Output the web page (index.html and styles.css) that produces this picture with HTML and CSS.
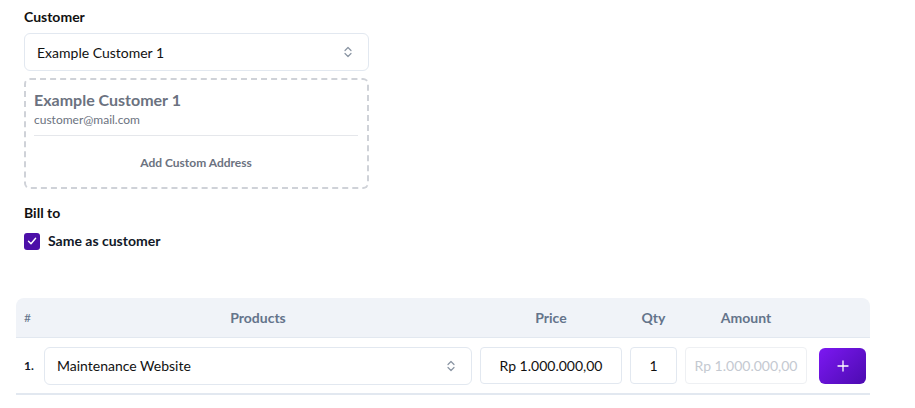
FILE: index.html
```html
<!DOCTYPE html>
<html>
<head>
<meta charset="utf-8">
<link rel="stylesheet" href="styles.css">
</head>
<body>
<div class="page">
  <section class="customer">
    <div class="label">Customer</div>
    <div class="select">
      <span>Example Customer 1</span>
      <svg class="chev" width="10" height="14" viewBox="0 0 10 14"><path d="M2 5.5 L5 2.5 L8 5.5 M2 8.5 L5 11.5 L8 8.5" fill="none" stroke="#8a94a3" stroke-width="1.2" stroke-linecap="round" stroke-linejoin="round"/></svg>
    </div>
    <div class="card">
      <div class="card-name">Example Customer 1</div>
      <div class="card-email">customer@mail.com</div>
      <div class="card-add">Add Custom Address</div>
    </div>
    <div class="label bill">Bill to</div>
    <label class="check-row">
      <span class="checkbox"><svg width="12" height="12" viewBox="0 0 12 12"><path d="M2.5 6.3 L5 8.8 L9.6 3.2" fill="none" stroke="#fff" stroke-width="1.4" stroke-linecap="round" stroke-linejoin="round"/></svg></span>
      <span>Same as customer</span>
    </label>
  </section>

  <div class="table">
    <div class="thead">
      <div class="c-num th-num">#</div>
      <div class="c-prod">Products</div>
      <div class="c-price">Price</div>
      <div class="c-qty">Qty</div>
      <div class="c-amt">Amount</div>
      <div class="c-act"></div>
    </div>
    <div class="trow">
      <div class="c-num num">1.</div>
      <div class="c-prod">
        <div class="select prod-select">
          <span>Maintenance Website</span>
          <svg class="chev" width="10" height="14" viewBox="0 0 10 14"><path d="M2 5.5 L5 2.5 L8 5.5 M2 8.5 L5 11.5 L8 8.5" fill="none" stroke="#8a94a3" stroke-width="1.2" stroke-linecap="round" stroke-linejoin="round"/></svg>
        </div>
      </div>
      <div class="c-price"><div class="input">Rp 1.000.000,00</div></div>
      <div class="c-qty"><div class="input">1</div></div>
      <div class="c-amt"><div class="input disabled">Rp 1.000.000,00</div></div>
      <div class="c-act"><button class="add-btn"><svg width="12" height="12" viewBox="0 0 12 12"><path d="M6 1 V11 M1 6 H11" stroke="#fff" stroke-width="1.3" stroke-linecap="round"/></svg></button></div>
    </div>
  </div>
</div>
</body>
</html>
```

FILE: styles.css
```css
* { box-sizing: border-box; }
body {
  margin: 0;
  font-family: "Lato", "Noto Sans", sans-serif;
  color: #111827;
  background: #fff;
}
.page {
  padding: 7px 45px 0 16px;
}
.customer {
  width: 353px;
  padding-left: 8px;
}
.label {
  font-size: 14px;
  font-weight: 700;
  line-height: 20px;
  color: #111;
}
.select {
  margin-top: 6px;
  height: 38px;
  border: 1px solid #e2e8f0;
  border-radius: 6px;
  display: flex;
  align-items: center;
  justify-content: space-between;
  padding: 0 15px 0 12px;
  font-size: 14px;
  color: #111;
}
.chev { display: block; }
.card {
  margin-top: 7px;
  height: 111px;
  border: 2px dashed #cfd2d8;
  border-radius: 6px;
  padding: 8px 9px 0 8px;
}
.card-name {
  font-size: 16px;
  font-weight: 700;
  line-height: 24px;
  color: #6b7280;
}
.card-email {
  font-size: 12px;
  line-height: 16px;
  color: #6b7280;
  padding-bottom: 7px;
  border-bottom: 1px solid #e5e7eb;
}
.card-add {
  height: 52px;
  display: flex;
  align-items: center;
  justify-content: center;
  font-size: 12px;
  color: #6b7280;
  font-weight: 700;
}
.bill { margin-top: 14px; }
.check-row {
  margin-top: 8px;
  display: flex;
  align-items: center;
  gap: 8px;
  font-size: 14px;
  font-weight: 700;
  line-height: 20px;
}
.checkbox {
  width: 16px;
  height: 17px;
  border-radius: 3px;
  background: #4c0fa8;
  display: flex;
  align-items: center;
  justify-content: center;
}
.table {
  margin-top: 47px;
  width: 854px;
  border-bottom: 2px solid #e2e8f0;
}
.thead, .trow {
  display: grid;
  grid-template-columns: 24px 436px 150px 55px 130px 59px;
  align-items: center;
}
.thead {
  height: 40px;
  background: #f0f3f8;
  border-top-left-radius: 8px;
  border-top-right-radius: 8px;
  border-bottom: 1px solid #e2e8f0;
  font-size: 14px;
  font-weight: 700;
  color: #64748b;
  text-align: center;
}
.th-num {
  text-align: left;
  padding-left: 8px;
  font-weight: 400;
  font-size: 12px;
}
.trow {
  height: 55px;
}
.num {
  padding-left: 8px;
  font-size: 12px;
  font-weight: 700;
}
.trow > div { padding: 0 4px; }
.trow > .num { padding-left: 8px; padding-right: 0; }
.prod-select {
  margin-top: 0;
  margin-left: 0;
}
.input {
  height: 37px;
  border: 1px solid #e2e8f0;
  border-radius: 4px;
  display: flex;
  align-items: center;
  justify-content: center;
  font-size: 14px;
  color: #111;
}
.input.disabled {
  color: #c4c9d1;
  border-color: #eef0f3;
}
.add-btn {
  width: 47px;
  height: 36px;
  border: none;
  border-radius: 6px;
  background: linear-gradient(135deg, #7c18f2 0%, #4c0bb0 100%);
  display: flex;
  align-items: center;
  justify-content: center;
  padding: 0;
  margin-left: 4px;
}
```
